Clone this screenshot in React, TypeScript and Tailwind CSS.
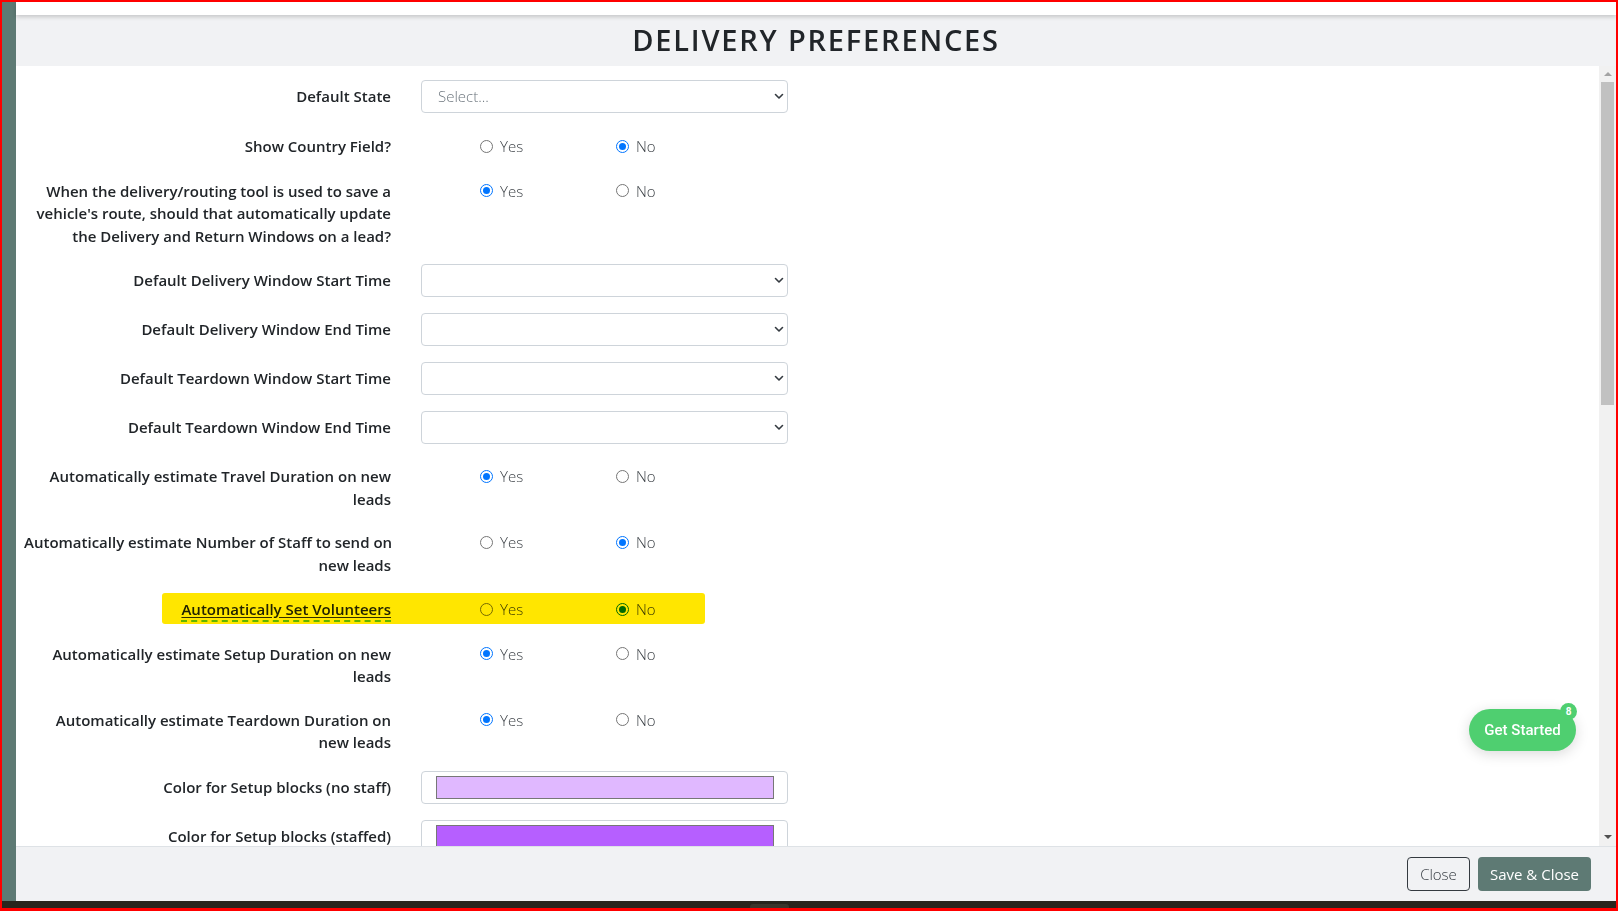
import React from "react";

type Row =
  | { kind: "select"; label: string[]; value?: string; mt: string }
  | { kind: "radio"; label: string[]; yes: boolean; mt: string; highlight?: boolean }
  | { kind: "color"; label: string[]; color: string; mt: string };

const rows: Row[] = [
  { kind: "select", label: ["Default State"], value: "Select...", mt: "mt-[14px]" },
  { kind: "radio", label: ["Show Country Field?"], yes: false, mt: "mt-[22px]" },
  {
    kind: "radio",
    label: [
      "When the delivery/routing tool is used to save a",
      "vehicle's route, should that automatically update",
      "the Delivery and Return Windows on a lead?",
    ],
    yes: true,
    mt: "mt-[22px]",
  },
  { kind: "select", label: ["Default Delivery Window Start Time"], mt: "mt-[17px]" },
  { kind: "select", label: ["Default Delivery Window End Time"], mt: "mt-[16px]" },
  { kind: "select", label: ["Default Teardown Window Start Time"], mt: "mt-[16px]" },
  { kind: "select", label: ["Default Teardown Window End Time"], mt: "mt-[16px]" },
  { kind: "radio", label: ["Automatically estimate Travel Duration on new", "leads"], yes: true, mt: "mt-[21px]" },
  { kind: "radio", label: ["Automatically estimate Number of Staff to send on", "new leads"], yes: false, mt: "mt-[21px]" },
  { kind: "radio", label: ["Automatically Set Volunteers"], yes: false, mt: "mt-[22px]", highlight: true },
  { kind: "radio", label: ["Automatically estimate Setup Duration on new", "leads"], yes: true, mt: "mt-[22px]" },
  { kind: "radio", label: ["Automatically estimate Teardown Duration on", "new leads"], yes: true, mt: "mt-[21px]" },
  { kind: "color", label: ["Color for Setup blocks (no staff)"], color: "bg-[#e0b8ff]", mt: "mt-[17px]" },
  { kind: "color", label: ["Color for Setup blocks (staffed)"], color: "bg-[#b65fff]", mt: "mt-[16px]" },
];

function Label({ lines, underline }: { lines: string[]; underline?: boolean }) {
  return (
    <div className="w-[375px] shrink-0 pl-2 text-right text-[15px] leading-[22.5px] font-semibold text-[#212529] whitespace-nowrap">
      {lines.map((l, i) =>
        underline ? (
          <span key={i} className="underline decoration-[#333] underline-offset-[2px] border-b-2 border-dashed border-[#62c8ff] pb-[1px]">
            {l}
          </span>
        ) : (
          <div key={i}>{l}</div>
        )
      )}
    </div>
  );
}

function Chevron() {
  return (
    <svg width="10" height="7" viewBox="0 0 10 7" fill="none">
      <path d="M1.5 1.5 5 5l3.5-3.5" stroke="#343a40" strokeWidth="1.6" strokeLinecap="round" strokeLinejoin="round" />
    </svg>
  );
}

function Radio({ checked }: { checked: boolean }) {
  return checked ? (
    <span className="flex h-[13px] w-[13px] items-center justify-center rounded-full border-[1.5px] border-[#0075ff] bg-white">
      <span className="h-[7px] w-[7px] rounded-full bg-[#0075ff]" />
    </span>
  ) : (
    <span className="h-[13px] w-[13px] rounded-full border border-[#767676] bg-white" />
  );
}

function FormRow({ row }: { row: Row }) {
  if (row.kind === "select") {
    return (
      <div className={`flex items-center ${row.mt}`}>
        <Label lines={row.label} />
        <div className="ml-[30px] flex h-[33px] w-[367px] items-center justify-between rounded-[4px] border border-[#ced4da] bg-white pl-[16px] pr-[3px] text-[15px] text-[#6c757d]">
          <span className="font-light">{row.value ?? ""}</span>
          <Chevron />
        </div>
      </div>
    );
  }
  if (row.kind === "color") {
    return (
      <div className={`flex items-center ${row.mt}`}>
        <Label lines={row.label} />
        <div className="ml-[30px] flex h-[33px] w-[367px] items-center rounded-[4px] border border-[#ced4da] bg-white pl-[14px] pr-[13px]">
          <div className={`h-[23px] w-full border border-[#777] ${row.color}`} />
        </div>
      </div>
    );
  }
  return (
    <div className={`relative flex items-start ${row.mt}`}>
      <Label lines={row.label} underline={row.highlight} />
      <div className="ml-[30px] flex h-[22.5px] items-center pl-[59px] text-[15px] font-light text-[#3d4247]">
        <label className="flex w-[136px] items-center gap-[7px]">
          <Radio checked={row.yes} />
          <span>Yes</span>
        </label>
        <label className="flex items-center gap-[7px]">
          <Radio checked={!row.yes} />
          <span>No</span>
        </label>
      </div>
      {row.highlight && (
        <div className="pointer-events-none absolute left-[146px] top-[-5px] h-[31px] w-[543px] rounded-[3px] bg-[#ffe600] mix-blend-multiply" />
      )}
    </div>
  );
}

export default function App() {
  return (
    <div className="flex h-[911px] w-[1618px] flex-col overflow-hidden border-l-2 border-r-2 border-t-2 border-b-[3px] border-[#ff0000] bg-white font-['Open_Sans',sans-serif]">
      <div className="flex min-h-0 flex-1">
        {/* left backdrop strip */}
        <div className="w-[14px] shrink-0 bg-[#5e7a74]" />

        {/* modal */}
        <div className="flex min-w-0 flex-1 flex-col">
          <div className="relative z-10 h-[13px] shrink-0 bg-white shadow-[0_2px_4px_rgba(0,0,0,0.18)]" />
          <div className="flex h-[51px] shrink-0 items-center justify-center bg-[#f1f2f4] pb-[2px]">
            <h1 className="text-[29px] font-semibold tracking-[1.8px] text-[#212529]">DELIVERY PREFERENCES</h1>
          </div>

          <div className="relative flex min-h-0 flex-1">
            <div className="min-w-0 flex-1 overflow-hidden bg-white">
              {rows.map((r, i) => (
                <FormRow key={i} row={r} />
              ))}
            </div>

            {/* scrollbar */}
            <div className="flex w-[17px] shrink-0 flex-col items-center bg-[#f1f1f1]">
              <div className="mt-[6px] h-0 w-0 border-x-[4px] border-b-[4px] border-x-transparent border-b-[#a3a3a3]" />
              <div className="mt-[6px] h-[323px] w-[13px] bg-[#c1c1c1]" />
              <div className="flex-1" />
              <div className="mb-[7px] h-0 w-0 border-x-[4px] border-t-[4px] border-x-transparent border-t-[#505050]" />
            </div>

            {/* Get Started widget */}
            <div className="absolute left-[1453px] top-[643px] flex h-[42px] w-[107px] items-center justify-center rounded-full bg-[#4fcf70] shadow-[0_3px_14px_rgba(0,0,0,0.15)] font-['Roboto',sans-serif] text-[15px] font-medium text-white">
              Get Started
              <span className="absolute right-[-1px] top-[-6px] flex h-[17px] w-[17px] items-center justify-center rounded-full bg-[#4fcf70] text-[10px] font-bold">
                8
              </span>
            </div>
          </div>

          {/* footer */}
          <div className="flex h-[55px] shrink-0 items-center justify-end gap-[8px] border-t border-[#dee2e6] bg-[#f1f2f4] pr-[25px]">
            <button className="h-[34px] w-[63px] rounded-[4px] border border-[#343a40] text-[15px] font-light text-[#343a40]">
              Close
            </button>
            <button className="h-[34px] w-[113px] rounded-[4px] bg-[#5e7a74] text-[15px] text-white">Save &amp; Close</button>
          </div>
        </div>
      </div>
      <div className="flex h-[7px] shrink-0 items-end bg-[#29251d] pl-[748px]">
        <div className="h-[4px] w-[39px] rounded-t-[3px] bg-[#3b362c]" />
      </div>
    </div>
  );
}
